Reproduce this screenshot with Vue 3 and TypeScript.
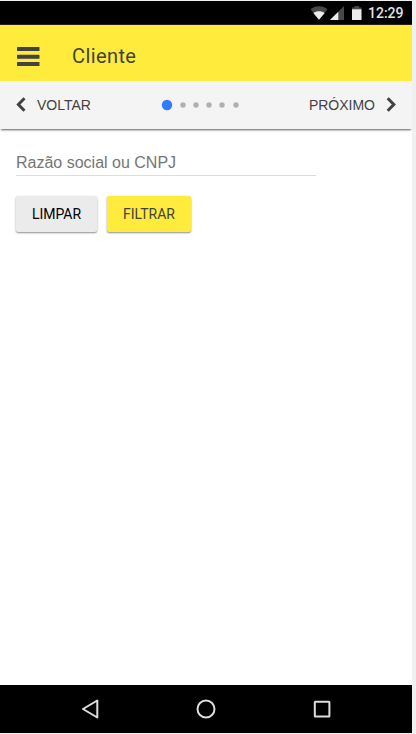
<script setup lang="ts">
import { ref } from 'vue'

const steps = 6
const current = ref(0)
const query = ref('')

function go(delta: number) {
  current.value = Math.min(steps - 1, Math.max(0, current.value + delta))
}
</script>

<template>
  <div class="frame">
    <div class="device">
      <div class="status">
        <svg class="wifi" width="18" height="14" viewBox="0 0 18 14">
          <path d="M0.5 3.2C5-.9 13-.9 17.5 3.2L9 13.8z" fill="#484848" />
          <path d="M3.3 7C6.5 4.6 11.5 4.6 14.7 7L9 13.8z" fill="#ececec" />
        </svg>
        <svg class="signal" width="14" height="14" viewBox="0 0 14 14">
          <path d="M0 14L14 0V14z" fill="#484848" />
          <path d="M0 14L8.3 5.7V14z" fill="#ececec" />
        </svg>
        <svg class="battery" width="10" height="14" viewBox="0 0 10 14">
          <path d="M2.5 0h4.5v1.5h2.5V4H0V1.5h2.5z" fill="#484848" />
          <path d="M0 3.3h9.5V14H0z" fill="#ececec" />
        </svg>
        <span class="clock">12:29</span>
      </div>

      <header class="toolbar">
        <svg class="menu" width="24" height="20" viewBox="0 0 24 20">
          <g fill="#424242">
            <rect x="0" y="1" width="22.5" height="4" rx="0.6" />
            <rect x="0" y="8.8" width="22.5" height="4" rx="0.6" />
            <rect x="0" y="16" width="22.5" height="4" rx="0.6" />
          </g>
        </svg>
        <h1>Cliente</h1>
      </header>

      <nav class="stepper">
        <button class="step-btn back" type="button" @click="go(-1)">
          <svg width="10" height="16" viewBox="0 0 10 16">
            <path d="M8.5 1.3L2.4 7.5L8.5 13.7" fill="none" stroke="#424242" stroke-width="3" />
          </svg>
          <span>VOLTAR</span>
        </button>
        <div class="dots">
          <span v-for="n in steps" :key="n" class="slot">
            <svg width="12" height="12" viewBox="0 0 12 12">
              <circle :class="['dot', { active: n - 1 === current }]" cx="6" cy="6" :r="n - 1 === current ? 5.2 : 2.7" />
            </svg>
          </span>
        </div>
        <button class="step-btn next" type="button" @click="go(1)">
          <span>PRÓXIMO</span>
          <svg width="10" height="16" viewBox="0 0 10 16">
            <path d="M1.7 1.3L7.8 7.5L1.7 13.7" fill="none" stroke="#424242" stroke-width="3" />
          </svg>
        </button>
      </nav>

      <main class="content">
        <input v-model="query" class="field" type="text" placeholder="Razão social ou CNPJ" />
        <div class="actions">
          <button class="btn clear" type="button" @click="query = ''">LIMPAR</button>
          <button class="btn filter" type="button">FILTRAR</button>
        </div>
      </main>

      <footer class="system">
        <svg width="22" height="22" viewBox="0 0 22 22">
          <path d="M18.3 2.5V19.5L4 11z" fill="none" stroke="#dedede" stroke-width="2" stroke-linejoin="round" />
        </svg>
        <svg width="22" height="22" viewBox="0 0 22 22">
          <circle cx="11" cy="11" r="8.5" fill="none" stroke="#dedede" stroke-width="2" />
        </svg>
        <svg width="22" height="22" viewBox="0 0 22 22">
          <rect x="3.8" y="3.8" width="14.6" height="14.6" rx="0.5" fill="none" stroke="#dedede" stroke-width="2" />
        </svg>
      </footer>
    </div>
  </div>
</template>

<style>
body {
  background: #f0f0f0;
}
</style>

<style scoped>
.frame {
  box-sizing: border-box;
  width: 416px;
  height: 734px;
  padding: 1px 4px 1px 0;
  background: #f0f0f0;
  font-family: Roboto, sans-serif;
}
.device {
  display: flex;
  flex-direction: column;
  height: 732px;
  background: #fff;
  overflow: hidden;
}
.status {
  box-sizing: border-box;
  display: flex;
  align-items: center;
  justify-content: flex-end;
  height: 24px;
  padding-right: 8px;
  background: #000;
  border-bottom: 1px solid #252321;
}
.signal {
  margin-left: 2px;
}
.battery {
  margin-left: 8px;
}
.clock {
  width: 36px;
  margin-left: 6px;
  padding-top: 1px;
  color: #e4e4e4;
  font-size: 14px;
  font-weight: 500;
  line-height: 24px;
  white-space: nowrap;
}
.toolbar {
  box-sizing: border-box;
  display: flex;
  align-items: center;
  height: 56px;
  padding: 5px 16px 0 17px;
  background: #ffeb3b;
}
h1 {
  margin: 0 0 0 31px;
  color: #424242;
  font-size: 20px;
  font-weight: 400;
  letter-spacing: 0.4px;
}
.stepper {
  position: relative;
  box-sizing: border-box;
  display: flex;
  align-items: center;
  justify-content: space-between;
  flex: none;
  height: 48px;
  padding: 0 16px;
  background: #f4f4f4;
  box-shadow: 0 2px 2px -1px rgba(0, 0, 0, 0.65);
}
.step-btn {
  display: flex;
  align-items: center;
  gap: 11px;
  padding: 0;
  border: 0;
  background: none;
  color: #424242;
  font: 14px 'Liberation Sans', sans-serif;
}
.dots {
  display: flex;
  align-items: center;
  margin-left: 3px;
}
.slot {
  display: flex;
  flex: none;
  justify-content: center;
  width: 13.2px;
}
.slot:first-child {
  margin-right: 2.5px;
}
.dot {
  fill: #b0b0b0;
}
.dot.active {
  fill: #2f7cff;
}
.content {
  flex: 1;
  padding: 19px 16px 0;
}
.field {
  display: block;
  box-sizing: border-box;
  width: 300px;
  height: 28px;
  padding: 2px 0 0;
  border: 0;
  border-bottom: 1px solid #dcdcdc;
  outline: 0;
  background: none;
  color: #212121;
  font: 16px 'Liberation Sans', sans-serif;
}
.field::placeholder {
  color: #757575;
}
.actions {
  display: flex;
  gap: 10px;
  margin-top: 20px;
}
.btn {
  height: 36px;
  padding: 0;
  border: 0;
  border-radius: 2px;
  box-shadow: 0 1px 2px rgba(0, 0, 0, 0.45);
  font: 400 14px Roboto, sans-serif;
}
.clear {
  width: 81px;
  background: #ebebeb;
  color: #000;
}
.filter {
  width: 84px;
  background: #ffeb3b;
  color: #424242;
}
.system {
  display: flex;
  align-items: center;
  justify-content: space-between;
  height: 48px;
  padding: 0 79px;
  background: #000;
}
</style>
